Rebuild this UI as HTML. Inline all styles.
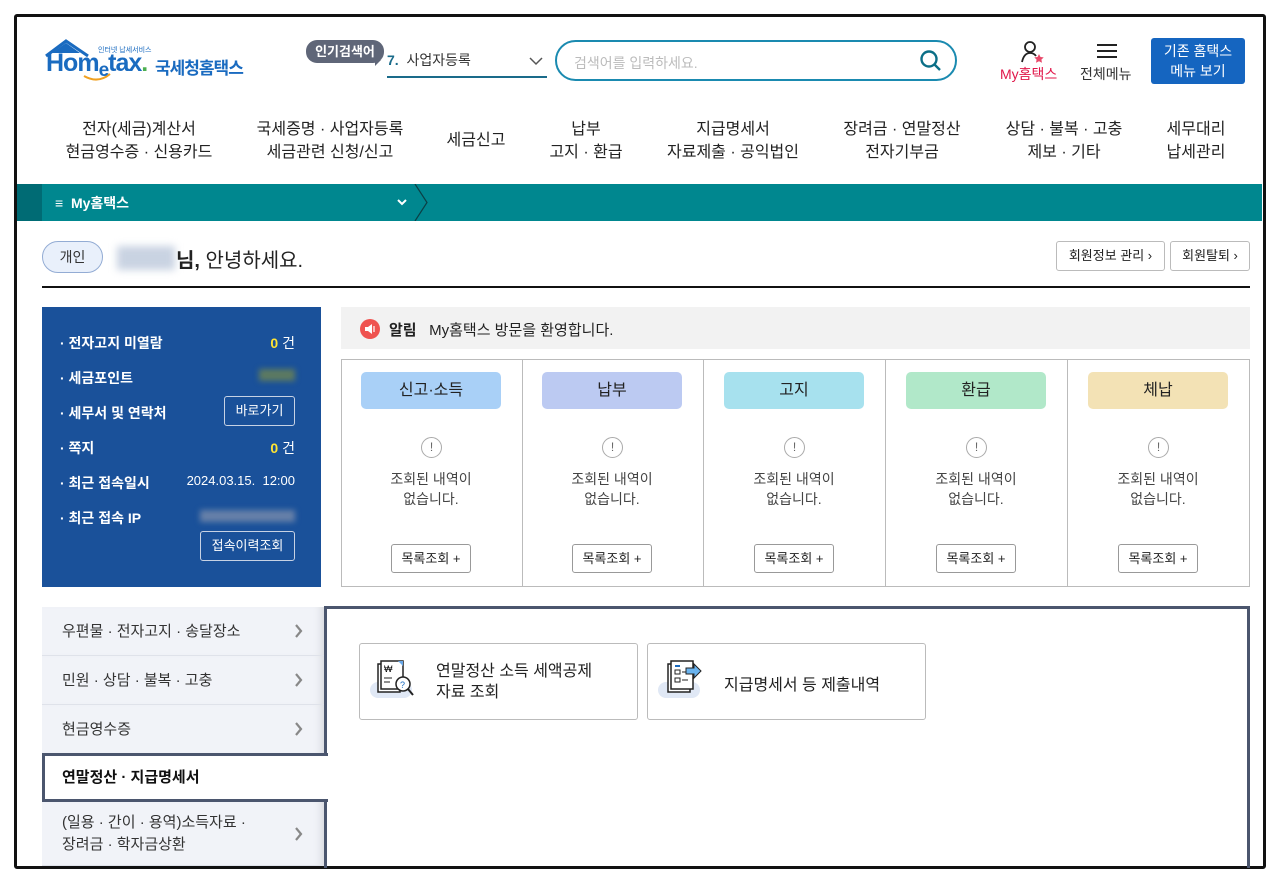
<!DOCTYPE html>
<html><head><meta charset="utf-8"><style>
*{box-sizing:border-box;margin:0;padding:0}
body{width:1280px;height:885px;background:#fff;font-family:"Liberation Sans","Noto Sans CJK KR",sans-serif;color:#222;position:relative;overflow:hidden}
.a{position:absolute}
.frame{left:14px;top:14px;width:1252px;height:855px;border:3px solid #111;border-radius:3px}
.nav div{position:absolute;top:118px;text-align:center;font-size:16px;line-height:23px;color:#222;transform:translateX(-50%);white-space:nowrap}
.bp{left:42px;top:307px;width:279px;height:280px;background:#1a519a;color:#fff;font-size:14px;font-weight:bold}
.bp .r{position:absolute;left:18px}
.bp .v{position:absolute;right:26px;font-weight:normal}
.btnw{position:absolute;border:1px solid #c7d2e4;border-radius:3px;color:#fff;font-size:13px;font-weight:normal;text-align:center;line-height:28px}
.col{position:absolute;top:359px;width:182px;height:228px;border-right:1px solid #bbb}
.pill{position:absolute;left:20px;top:13px;width:140px;height:37px;border-radius:5px;text-align:center;line-height:37px;font-size:16px;color:#222}
.ex{position:absolute;left:80px;top:78px;width:21px;height:21px;border:1px solid #aaa;border-radius:50%;font-size:12px;text-align:center;line-height:19px;color:#666}
.msg{position:absolute;left:0;width:180px;top:110px;text-align:center;font-size:14px;line-height:20px;color:#444}
.lb{position:absolute;left:50px;top:185px;width:80px;height:29px;border:1px solid #999;border-radius:3px;font-size:13px;text-align:center;line-height:27px;color:#222}
.mi{position:absolute;left:42px;width:283px;background:#f1f3f8;border-bottom:1px solid #dfe2ea;font-size:15px;color:#333;padding-left:20px;box-shadow:inset -10px 0 10px -8px rgba(0,0,0,.15)}
.mi svg{position:absolute;right:22px;top:50%;margin-top:-7px}
.card{position:absolute;top:643px;height:77px;border:1px solid #bbb;border-radius:3px;background:#fff}
</style></head><body>
<div class="a frame"></div>

<svg class="a" style="left:44px;top:38px" width="80" height="46" viewBox="0 0 80 46">
<path d="M2 18 L22 3 L44 18" fill="none" stroke="#1a6bc0" stroke-width="3"/>
<path d="M8 15 L22 5 L36 15 Z" fill="#1a6bc0"/>
<path d="M40 38 Q54 46 66 36" fill="none" stroke="#f0a020" stroke-width="2"/>
</svg>
<div class="a" style="left:98px;top:45px;font-size:7px;color:#1a6bc0">인터넷 납세서비스</div>
<div class="a" style="left:46px;top:50px;font-size:25px;font-weight:bold;color:#1a6bc0;letter-spacing:-1px;line-height:26px">Hom<span style="font-size:19px;position:relative;top:5px">e</span>tax<span style="color:#4caf50">.</span></div>
<div class="a" style="left:155px;top:54px;font-size:17px;font-weight:bold;color:#1a6bc0;letter-spacing:-1px">국세청홈택스</div>

<div class="a" style="left:306px;top:40px;width:78px;height:23px;background:#5f6678;border-radius:11px;color:#fff;font-size:13px;font-weight:bold;text-align:center;line-height:23px">인기검색어</div>
<div class="a" style="left:375px;top:60px;width:0;height:0;border-left:6px solid #5f6678;border-bottom:6px solid transparent"></div>
<div class="a" style="left:387px;top:50px;width:160px;height:28px;border-bottom:2px solid #1a6b8a;font-size:14px;color:#333"><b style="color:#1a6b8a">7.</b>&nbsp; 사업자등록</div>
<svg class="a" style="left:529px;top:56px" width="14" height="10"><path d="M1 2 L7 8 L13 2" fill="none" stroke="#555" stroke-width="1.5"/></svg>
<div class="a" style="left:555px;top:40px;width:402px;height:41px;border:2px solid #1a8ab0;border-radius:21px;font-size:14px;color:#bbb;padding:11px 0 0 17px">검색어를 입력하세요.</div>
<svg class="a" style="left:919px;top:49px" width="24" height="24"><circle cx="10" cy="10" r="7.5" fill="none" stroke="#0b6f87" stroke-width="2.4"/><path d="M15.5 15.5 L21 21" stroke="#0b6f87" stroke-width="2.4"/></svg>

<svg class="a" style="left:1020px;top:40px" width="26" height="24"><circle cx="10" cy="7" r="5" fill="none" stroke="#222" stroke-width="1.8"/><path d="M2 22 Q4 13 10 13 Q14 13 16 16" fill="none" stroke="#222" stroke-width="1.8"/><path d="M19 14 l1.5 3 3.2.4-2.3 2.2.6 3.2-3-1.6-3 1.6.6-3.2-2.3-2.2 3.2-.4z" fill="#e8496a"/></svg>
<div class="a" style="left:1000px;top:64px;font-size:14px;color:#e0174a">My홈택스</div>
<svg class="a" style="left:1096px;top:43px" width="22" height="16"><path d="M1 2H21M1 8H21M1 14H21" stroke="#222" stroke-width="2"/></svg>
<div class="a" style="left:1080px;top:64px;font-size:14px;color:#333">전체메뉴</div>
<div class="a" style="left:1151px;top:38px;width:94px;height:46px;background:#1565c0;border-radius:3px;color:#fff;font-size:14px;text-align:center;line-height:20px;padding-top:3px">기존 홈택스<br>메뉴 보기</div>

<div class="nav">
<div style="left:139px">전자(세금)계산서<br>현금영수증 · 신용카드</div>
<div style="left:330px">국세증명 · 사업자등록<br>세금관련 신청/신고</div>
<div style="left:476px;top:129px">세금신고</div>
<div style="left:586px">납부<br>고지 · 환급</div>
<div style="left:733px">지급명세서<br>자료제출 · 공익법인</div>
<div style="left:902px">장려금 · 연말정산<br>전자기부금</div>
<div style="left:1064px">상담 · 불복 · 고충<br>제보 · 기타</div>
<div style="left:1196px">세무대리<br>납세관리</div>
</div>

<div class="a" style="left:17px;top:184px;width:1245px;height:37px;background:#00878f"></div>
<div class="a" style="left:17px;top:184px;width:25px;height:37px;background:#006b74"></div>
<div class="a" style="left:55px;top:193px;font-size:14px;font-weight:bold;color:#fff">≡ &nbsp;My홈택스</div>
<svg class="a" style="left:396px;top:198px" width="12" height="10"><path d="M2 2 L6 6 L10 2" fill="none" stroke="#fff" stroke-width="2"/></svg>
<svg class="a" style="left:414px;top:184px" width="16" height="37"><path d="M1 0 L13 18.5 L1 37" fill="none" stroke="#0b3f45" stroke-width="1.2"/></svg>

<div class="a" style="left:42px;top:241px;width:61px;height:32px;background:#e9f0fb;border:1px solid #93acd4;border-radius:16px;font-size:14px;text-align:center;line-height:30px;color:#333">개인</div>
<div class="a" style="left:117px;top:246px;width:58px;height:24px;background:#c9d3e2;filter:blur(4px)"></div>
<div class="a" style="left:176px;top:244px;font-size:20px;color:#222"><b>님,</b> 안녕하세요.</div>
<div class="a" style="left:1056px;top:241px;width:109px;height:30px;border:1px solid #bbb;border-radius:3px;font-size:13px;text-align:center;line-height:28px">회원정보 관리 ›</div>
<div class="a" style="left:1170px;top:241px;width:80px;height:30px;border:1px solid #bbb;border-radius:3px;font-size:13px;text-align:center;line-height:28px">회원탈퇴 ›</div>
<div class="a" style="left:42px;top:286px;width:1208px;height:2px;background:#111"></div>

<div class="a bp">
<div class="r" style="top:26px">· 전자고지 미열람</div><div class="v" style="top:26px"><b style="color:#ffe433">0</b> 건</div>
<div class="r" style="top:61px">· 세금포인트</div><div class="v" style="top:62px;width:36px;height:12px;background:#5d7a60;filter:blur(3px)"></div>
<div class="r" style="top:96px">· 세무서 및 연락처</div><div class="btnw" style="left:182px;top:89px;width:71px;height:30px">바로가기</div>
<div class="r" style="top:131px">· 쪽지</div><div class="v" style="top:131px"><b style="color:#ffe433">0</b> 건</div>
<div class="r" style="top:166px">· 최근 접속일시</div><div class="v" style="top:166px;font-size:13px">2024.03.15. &nbsp;12:00</div>
<div class="r" style="top:201px">· 최근 접속 IP</div><div class="v" style="top:203px;width:95px;height:12px;background:#6680a8;filter:blur(3px)"></div>
<div class="btnw" style="left:158px;top:224px;width:95px;height:30px">접속이력조회</div>
</div>

<div class="a" style="left:341px;top:307px;width:909px;height:42px;background:#f2f2f2"></div>
<svg class="a" style="left:360px;top:319px" width="20" height="20"><circle cx="10" cy="10" r="10" fill="#ef5350"/><path d="M5 8h3l4-3v10l-4-3H5z" fill="#fff"/><path d="M14 7v6" stroke="#fff" stroke-width="1.2"/></svg>
<div class="a" style="left:389px;top:319px;font-size:15px;color:#222"><b>알림</b>&nbsp;&nbsp; My홈택스 방문을 환영합니다.</div>

<div class="a" style="left:341px;top:359px;width:909px;height:228px;border:1px solid #bbb"></div>
<div class="col" style="left:341px"><div class="pill" style="background:#a9d0f7">신고·소득</div><div class="ex">!</div><div class="msg">조회된 내역이<br>없습니다.</div><div class="lb">목록조회 +</div></div>
<div class="col" style="left:522px"><div class="pill" style="background:#bccaf2">납부</div><div class="ex">!</div><div class="msg">조회된 내역이<br>없습니다.</div><div class="lb">목록조회 +</div></div>
<div class="col" style="left:704px"><div class="pill" style="background:#a7e1ee">고지</div><div class="ex">!</div><div class="msg">조회된 내역이<br>없습니다.</div><div class="lb">목록조회 +</div></div>
<div class="col" style="left:886px"><div class="pill" style="background:#b1e8c9">환급</div><div class="ex">!</div><div class="msg">조회된 내역이<br>없습니다.</div><div class="lb">목록조회 +</div></div>
<div class="col" style="left:1068px;border-right:none"><div class="pill" style="background:#f3e2b5">체납</div><div class="ex">!</div><div class="msg">조회된 내역이<br>없습니다.</div><div class="lb">목록조회 +</div></div>

<div class="mi" style="top:607px;height:49px;line-height:49px">우편물 · 전자고지 · 송달장소<svg width="8" height="14"><path d="M1 1 L6 7 L1 13" fill="none" stroke="#888" stroke-width="2.2"/></svg></div>
<div class="mi" style="top:656px;height:49px;line-height:49px">민원 · 상담 · 불복 · 고충<svg width="8" height="14"><path d="M1 1 L6 7 L1 13" fill="none" stroke="#888" stroke-width="2.2"/></svg></div>
<div class="mi" style="top:705px;height:49px;line-height:49px">현금영수증<svg width="8" height="14"><path d="M1 1 L6 7 L1 13" fill="none" stroke="#888" stroke-width="2.2"/></svg></div>
<div class="mi" style="top:802px;height:64px;line-height:22px;padding-top:10px">(일용 · 간이 · 용역)소득자료 ·<br>장려금 · 학자금상환<svg width="8" height="14"><path d="M1 1 L6 7 L1 13" fill="none" stroke="#888" stroke-width="2.2"/></svg></div>

<div class="a" style="left:324px;top:606px;width:926px;height:262px;border:3px solid #4b566e;border-bottom:none"></div>
<div class="a" style="left:42px;top:753px;width:286px;height:49px;background:#fff;border:3px solid #4b566e;border-right:none;font-size:15px;font-weight:bold;line-height:43px;padding-left:17px;color:#111">연말정산 · 지급명세서</div>

<div class="card" style="left:359px;width:279px">
<div class="a" style="left:10px;top:38px;width:42px;height:16px;border-radius:8px;background:#e0e8f5"></div>
<svg class="a" style="left:14px;top:16px" width="46" height="42"><rect x="4" y="4" width="22" height="28" fill="#fff" stroke="#222" stroke-width="1.5"/><rect x="7" y="1" width="22" height="28" fill="#fff" stroke="#222" stroke-width="1.5"/><path d="M24 1 h5 v5z" fill="#6aa8e8"/><text x="10" y="12" font-size="9" font-family="Liberation Sans">₩</text><path d="M10 18h8M10 22h6" stroke="#222"/><circle cx="29" cy="24" r="7" fill="#fff" stroke="#222" stroke-width="1.5"/><text x="26" y="28" font-size="9" fill="#1a6bc0" font-family="Liberation Sans">?</text><path d="M34 29 L39 35" stroke="#222" stroke-width="2"/></svg>
<div class="a" style="left:76px;top:17px;font-size:16px;line-height:21px;color:#222">연말정산 소득 세액공제<br>자료 조회</div>
</div>
<div class="card" style="left:647px;width:279px">
<div class="a" style="left:10px;top:38px;width:42px;height:16px;border-radius:8px;background:#e0e8f5"></div>
<svg class="a" style="left:18px;top:16px" width="40" height="40"><rect x="2" y="4" width="22" height="28" fill="#fff" stroke="#222" stroke-width="1.5"/><rect x="5" y="1" width="22" height="28" fill="#fff" stroke="#222" stroke-width="1.5"/><path d="M9 6h5" stroke="#1a6bc0" stroke-width="2"/><rect x="9" y="10" width="5" height="4" fill="none" stroke="#222"/><rect x="9" y="18" width="5" height="4" fill="none" stroke="#222"/><path d="M16 12h6M16 20h6" stroke="#222"/><path d="M20 8h8v-4l7 7-7 7v-4h-8z" fill="#6ab4f0" stroke="#222" stroke-width="1"/></svg>
<div class="a" style="left:76px;top:27px;font-size:16px;color:#222">지급명세서 등 제출내역</div>
</div>
</body></html>
